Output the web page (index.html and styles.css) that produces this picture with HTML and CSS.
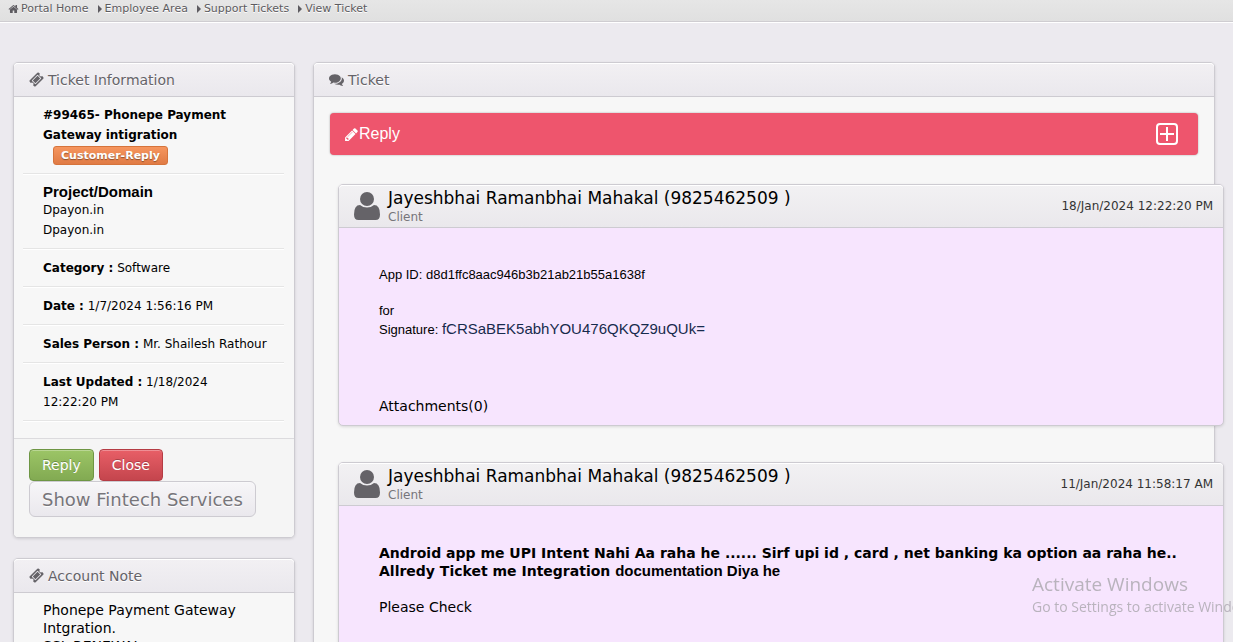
FILE: index.html
```html
<!DOCTYPE html>
<html lang="en">
<head>
<meta charset="utf-8">
<title>View Ticket</title>
<link rel="stylesheet" href="styles.css">
</head>
<body>
<svg class="sprite" aria-hidden="true">
  <symbol id="home" viewBox="0 0 1792 1792"><path d="M1472 992v480q0 26-19 45t-45 19h-384v-384h-256v384h-384q-26 0-45-19t-19-45v-480q0-1 .5-3t.5-3l575-474 575 474q1 2 1 6zm223-69l-62 74q-8 9-21 11h-3q-13 0-21-7l-692-577-692 577q-12 8-24 7-13-2-21-11l-62-74q-8-10-7-23.500t11-21.500l719-599q32-26 76-26t76 26l244 204v-195q0-14 9-23t23-9h192q14 0 23 9t9 23v408l219 182q10 8 11 21.500t-7 23.500z"/></symbol>
  <symbol id="ticket" viewBox="0 0 1792 1792"><path d="M1024 452l316 316-572 572-316-316zm-211 979l618-618q19-19 19-45t-19-45l-362-362q-18-18-45-18t-45 18l-618 618q-19 19-19 45t19 45l362 362q18 18 45 18t45-18zm889-637l-907 908q-37 37-90.500 37t-90.500-37l-126-125q56-56 56-136t-56-136-136-56-136 56l-125-126q-37-37-37-90.500t37-90.500l907-906q37-37 90.500-37t90.500 37l125 125q-56 56-56 136t56 136 136 56 136-56l126 125q37 37 37 90.500t-37 90.500z"/></symbol>
  <symbol id="comments" viewBox="0 0 1792 1792"><path d="M1408 768q0 139-94 257t-256.500 186.500-353.500 68.500q-86 0-176-16-124 88-278 128-36 9-86 16h-3q-11 0-20.500-8t-11.500-21q-1-3-1-6.500t.5-6.500 2-6l2.500-5 3.500-5.500 4-5 4.500-5 4-4.500q5-6 23-25t26-29.500 22.500-29 25-38.500 20.500-44q-124-72-195-177t-71-224q0-139 94-257t256.500-186.500 353.500-68.500 353.500 68.500 256.500 186.500 94 257zm384 256q0 120-71 224.500t-195 176.500q10 24 20.500 44t25 38.500 22.500 29 26 29.500 23 25q1 1 4 4.500t4.500 5 4 5 3.500 5.500l2.500 5 2 6 .5 6.500-1 6.500q-3 14-13 22t-22 7q-50-7-86-16-154-40-278-128-90 16-176 16-271 0-472-132 58 4 88 4 161 0 309-45t264-129q125-92 192-212t67-254q0-77-23-152 129 71 204 178t75 230z"/></symbol>
  <symbol id="pencil" viewBox="0 0 1792 1792"><path d="M491 1536l91-91-235-235-91 91v107h128v128h107zm523-928q0-22-22-22-10 0-17 7l-542 542q-7 7-7 17 0 22 22 22 10 0 17-7l542-542q7-7 7-17zm-54-192l416 416-832 832h-416v-416zm683 96q0 53-37 90l-166 166-416-416 166-165q36-38 90-38 53 0 91 38l235 234q37 39 37 91z"/></symbol>
  <symbol id="user" viewBox="0 0 26 28"><circle cx="13" cy="7" r="7"/><path d="M6 13Q9 15.500 13 15.500T20 13Q26 13 26 22.500Q26 28 21.500 28H4.500Q0 28 0 22.500Q0 13 6 13z"/></symbol>
  <symbol id="plus" viewBox="0 0 22 22"><rect x="1" y="1" width="20" height="20" rx="3" fill="none" stroke="currentColor" stroke-width="2"/><path d="M10 4h2v6h6v2h-6v6h-2v-6H4v-2h6z"/></symbol>
</svg>

<nav class="crumbs" aria-label="Breadcrumb">
  <a class="crumb crumb-home" href="#"><svg class="icon-home"><use href="#home"/></svg>Portal Home</a>
  <a class="crumb" href="#">Employee Area</a>
  <a class="crumb" href="#">Support Tickets</a>
  <a class="crumb" href="#">View Ticket</a>
</nav>

<main class="page">
  <aside class="side">
    <section class="panel">
      <h2 class="panel-head"><svg class="icon"><use href="#ticket"/></svg>Ticket Information</h2>
      <div class="rows">
        <div class="row"><b>#99465- Phonepe Payment Gateway intigration</b><div class="badge-line"><span class="badge">Customer-Reply</span></div></div>
        <div class="row"><h3 class="row-title">Project/Domain</h3>Dpayon.in<br>Dpayon.in</div>
        <div class="row"><b>Category :</b> Software</div>
        <div class="row"><b>Date :</b> 1/7/2024 1:56:16 PM</div>
        <div class="row"><b>Sales Person :</b> Mr. Shailesh Rathour</div>
        <div class="row"><b>Last Updated :</b> 1/18/2024<br>12:22:20 PM</div>
      </div>
      <div class="actions">
        <button class="btn btn-green" type="button">Reply</button>
        <button class="btn btn-red" type="button">Close</button>
        <button class="btn btn-large" type="button">Show Fintech Services</button>
      </div>
    </section>
    <section class="panel">
      <h2 class="panel-head"><svg class="icon"><use href="#ticket"/></svg>Account Note</h2>
      <p class="note">Phonepe Payment Gateway Intgration.<br>SSL RENEWAL</p>
    </section>
  </aside>

  <section class="panel thread">
    <h2 class="panel-head"><svg class="icon"><use href="#comments"/></svg>Ticket</h2>
    <div class="thread-body">
      <button class="reply-bar" type="button"><svg class="icon-pencil"><use href="#pencil"/></svg><span class="reply-text">Reply</span><svg class="icon-plus"><use href="#plus"/></svg></button>

      <article class="message">
        <header class="message-head">
          <svg class="icon-user"><use href="#user"/></svg>
          <div class="who"><h3 class="name">Jayeshbhai Ramanbhai Mahakal (9825462509 )</h3><div class="role">Client</div></div>
          <time class="when">18/Jan/2024 12:22:20 PM</time>
        </header>
        <div class="message-body">
          <p class="sans">App ID: d8d1ffc8aac946b3b21ab21b55a1638f</p>
          <p class="sans">for<br>Signature: <span class="signature">fCRSaBEK5abhYOU476QKQZ9uQUk=</span></p>
          <p class="attachments">Attachments(0)</p>
        </div>
      </article>

      <article class="message">
        <header class="message-head">
          <svg class="icon-user"><use href="#user"/></svg>
          <div class="who"><h3 class="name">Jayeshbhai Ramanbhai Mahakal (9825462509 )</h3><div class="role">Client</div></div>
          <time class="when">11/Jan/2024 11:58:17 AM</time>
        </header>
        <div class="message-body">
          <p><b>Android app me UPI Intent Nahi Aa raha he ...... Sirf upi id , card , net banking ka option aa raha he..<br>Allredy Ticket me Integration <span class="arial">documentation Diya he</span></b></p>
          <p>Please Check</p>
        </div>
      </article>
    </div>
  </section>
</main>

<div class="watermark"><div class="watermark-title">Activate Windows</div>Go to Settings to activate Windows.</div>
</body>
</html>
```

FILE: styles.css
```css
* { box-sizing: border-box; }
html { height: 100%; overflow: hidden; }
body {
  margin: 0;
  height: 100%;
  overflow: hidden;
  background: #eceaef;
  color: #000;
  font-family: Verdana, "DejaVu Sans", sans-serif;
  font-size: 14px;
  line-height: 18px;
}
h2, h3, p { margin: 0; font-weight: normal; }
svg { fill: currentColor; flex: none; }
.sprite { display: none; }

.crumbs {
  display: flex;
  height: 22px;
  padding: 0 8px;
  gap: 9px;
  background: linear-gradient(#e6e6e6, #e0e0e0);
  border-bottom: 1px solid #cfcdd1;
  box-shadow: 0 1px 0 #fff;
}
.crumb {
  display: flex;
  align-items: center;
  gap: 3px;
  height: 17px;
  color: #5d5b60;
  font-size: 11px;
  line-height: 17px;
  text-decoration: none;
  white-space: nowrap;
  text-shadow: 0 1px 0 #fff;
}
.crumb:not(.crumb-home)::before {
  content: "";
  border: 4px solid transparent;
  border-left-color: #5d5b60;
  border-right-width: 0;
}
.crumb-home { gap: 2px; }
.icon-home { width: 11px; height: 12px; }

.page {
  display: grid;
  grid-template-columns: 282px minmax(0, 1fr);
  gap: 18px;
  align-items: start;
  padding: 40px 18px 0 13px;
}
.side { display: grid; gap: 20px; }
.panel {
  border: 1px solid #cdcbd1;
  border-radius: 5px;
  background: #f7f7f7;
  box-shadow: 0 1px 3px rgba(0, 0, 0, .12);
}
.panel-head {
  display: flex;
  align-items: center;
  gap: 4px;
  height: 34px;
  padding: 0 15px;
  border-bottom: 1px solid #cdcbd1;
  border-radius: 4px 4px 0 0;
  background: linear-gradient(#f2f0f3, #eae8ed);
  box-shadow: inset 0 1px 0 #fff;
  color: #656368;
  font-size: 14px;
  text-shadow: 0 1px 0 #fff;
}
.icon { width: 15px; height: 15px; }

.rows { padding: 0 10px 17px 9px; font-size: 12px; line-height: 20px; }
.row {
  padding: 8px 16px 8px 20px;
  border-bottom: 1px solid #e5e5e5;
  box-shadow: 0 1px 0 #fff;
}
.row + .row { margin-top: 1px; }
.row-title { font: bold 15px/17px "Liberation Sans", Arial, sans-serif; }
.badge-line { display: flex; padding-left: 10px; height: 20px; align-items: center; }
.badge {
  padding: 0 7px;
  border: 1px solid #d6743c;
  border-radius: 3px;
  background: linear-gradient(#f6965f, #e07b45);
  color: #fff;
  font-size: 11px;
  font-weight: bold;
  line-height: 17px;
  text-shadow: 0 1px 1px rgba(0, 0, 0, .4);
}

.actions {
  display: flex;
  flex-wrap: wrap;
  column-gap: 5px;
  padding: 10px 15px 20px;
  border-top: 1px solid #dcdbde;
  background: #f5f5f5;
  border-radius: 0 0 4px 4px;
}
.btn {
  height: 32px;
  padding: 0 12px;
  border: 1px solid;
  border-radius: 4px;
  font-family: inherit;
  font-size: 14px;
  color: #fff;
  white-space: nowrap;
  box-shadow: inset 0 1px 0 rgba(255, 255, 255, .3);
  text-shadow: 0 -1px 0 rgba(0, 0, 0, .25);
}
.btn-green { border-color: #6e9644; background: linear-gradient(#9cc566, #82aa52); }
.btn-red { border-color: #b53c44; background: linear-gradient(#e85f67, #c4454d); }
.btn-large {
  height: 36px;
  border-color: #cdcbd1;
  border-radius: 6px;
  background: linear-gradient(#f7f6f8, #eae8ed);
  color: #77757a;
  font-size: 18px;
  text-shadow: 0 1px 0 #fff;
}
.note { padding: 8px 29px; }

.thread-body { padding: 16px 16px 24px; }
.reply-bar {
  display: flex;
  align-items: center;
  width: 100%;
  height: 42px;
  padding: 0 20px 0 14px;
  border: 0;
  border-radius: 4px;
  background: #ee556d;
  color: #fff;
  font: 16px/20px "Liberation Sans", Arial, sans-serif;
  text-align: left;
  box-shadow: 0 0 2px rgba(0, 0, 0, .35);
}
.reply-text { flex: 1; }
.icon-pencil { width: 15px; height: 17px; }
.icon-plus { width: 22px; height: 22px; }

.message {
  margin: 29px -26px 0 8px;
  border: 1px solid #cdcbd1;
  border-radius: 5px;
  background: #f7e5fe;
  box-shadow: 0 1px 3px rgba(0, 0, 0, .12);
}
.message + .message { margin-top: 36px; }
.message-head {
  display: flex;
  align-items: center;
  gap: 8px;
  height: 43px;
  padding: 0 10px 0 15px;
  border-bottom: 1px solid #cdcbd1;
  border-radius: 4px 4px 0 0;
  background: linear-gradient(#f2f1f3, #eae8ec);
  box-shadow: inset 0 1px 0 #fff;
}
.icon-user { width: 26px; height: 28px; color: #656368; }
.who { flex: 1; }
.name { font-size: 17px; line-height: 22px; }
.role { color: #77757a; font-size: 12px; line-height: 16px; }
.when { color: #333; font-size: 12px; }
.message-body {
  display: grid;
  gap: 18px;
  padding: 38px 40px 10px;
}
.sans { font-family: "Liberation Sans", Arial, sans-serif; font-size: 13px; line-height: 18px; }
.signature { color: #172b4d; font-size: 15px; }
.attachments { padding-top: 40px; }
.arial { font-family: "Liberation Sans", Arial, sans-serif; font-size: 15px; }
.message:last-child .message-body { padding-bottom: 60px; }

.watermark {
  position: fixed;
  left: 1032px;
  bottom: 25px;
  color: #b9b3bd;
  font: 14px/20px "Open Sans", "Segoe UI", sans-serif;
  white-space: nowrap;
}
.watermark-title { font-size: 19px; line-height: 26px; }
```
